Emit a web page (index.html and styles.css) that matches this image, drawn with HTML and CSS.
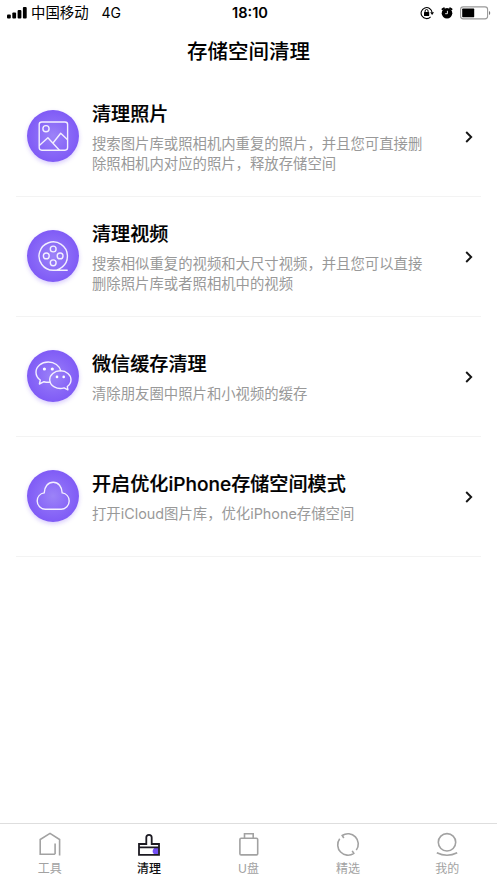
FILE: index.html
```html
<!DOCTYPE html>
<html lang="zh-CN">
<head>
<meta charset="utf-8">
<title>存储空间清理</title>
<link rel="stylesheet" href="styles.css">
</head>
<body>
<div class="screen">
  <div class="status">
    <div class="status-left">
      <svg class="signal" width="20" height="12" viewBox="0 0 20 12"><rect x="0" y="7.5" width="3.8" height="4" rx="1"/><rect x="5.3" y="5.5" width="3.8" height="6" rx="1"/><rect x="10.6" y="3" width="3.8" height="8.5" rx="1"/><rect x="15.9" y="0" width="3.8" height="11.5" rx="1"/></svg>
      <span class="carrier">中国移动</span><span class="network">4G</span>
    </div>
    <span class="clock">18:10</span>
    <div class="status-right">
      <svg width="14" height="14" viewBox="0 0 14 14"><path d="M10.6 10.9A5.5 5.5 0 1 1 12.1 6.5" fill="none" stroke="#000" stroke-width="1.1"/><path d="M10.2 6.3h3.8l-1.9 2.8z"/><rect x="4" y="6.1" width="5.2" height="3.8" rx=".5"/><path d="M5.1 6.4V5a1.5 1.5 0 0 1 3 0v1.4" fill="none" stroke="#000" stroke-width="1"/></svg>
      <svg class="alarm" width="12" height="14" viewBox="0 0 12 14"><circle cx="6" cy="7.3" r="5.3"/><path d="M1.4 3.3 3 2.2M10.6 3.3 9 2.2" stroke="#000" stroke-width="1.8" stroke-linecap="round"/><path d="M6.4 4.8v2.9H4.2" fill="none" stroke="#fff" stroke-width=".9"/></svg>
      <svg width="31" height="14" viewBox="0 0 31 14"><rect x=".6" y=".9" width="27" height="12" rx="2.6" fill="none" stroke="#999" stroke-width="1.1"/><rect x="2.2" y="2.6" width="12" height="8.6" rx=".6"/><path d="M29 5c1.7.8 1.7 3.2 0 4z" fill="#777"/></svg>
    </div>
  </div>
  <h1 class="heading">存储空间清理</h1>
  <main class="list">
    <section class="row">
      <span class="badge"><svg width="52" height="52" viewBox="0 0 52 52"><rect x="12.2" y="12" width="28.4" height="28.2" rx="2.6"/><circle cx="19" cy="18.7" r="3.1"/><path d="m12.6 35.2 8.3-7.4 11.3 12.1M26.2 32.7l7.5-9.5 6.6 6.3"/></svg></span>
      <div class="copy"><h2>清理照片</h2><p>搜索图片库或照相机内重复的照片，并且您可直接删<br>除照相机内对应的照片，释放存储空间</p></div>
      <svg class="chevron" width="8" height="12" viewBox="0 0 8 12"><path d="m1.2 1 5 5-5 5"/></svg>
    </section>
    <section class="row">
      <span class="badge"><svg width="52" height="52" viewBox="0 0 52 52"><path d="M40.2 40.3H26.2A14.2 14.2 0 1 1 35.2 37.1Q32.6 39.5 29.5 40.2"/><circle cx="26.2" cy="19" r="2.9"/><circle cx="19.3" cy="25.9" r="2.9"/><circle cx="33.1" cy="25.9" r="2.9"/><circle cx="26.2" cy="32.8" r="2.9"/></svg></span>
      <div class="copy"><h2>清理视频</h2><p>搜索相似重复的视频和大尺寸视频，并且您可以直接<br>删除照片库或者照相机中的视频</p></div>
      <svg class="chevron" width="8" height="12" viewBox="0 0 8 12"><path d="m1.2 1 5 5-5 5"/></svg>
    </section>
    <section class="row">
      <span class="badge"><svg width="52" height="52" viewBox="0 0 52 52"><path d="M33.7 20.7C32.5 15.7 27.6 12 21.2 12 14.4 12 9 16.6 9 22.2c0 3.2 1.6 5.9 4.3 7.8l-.9 4 4.6-2.3c2.2.6 4.3.7 6.3.4"/><path d="M33.4 20.8c6 0 10.6 4 10.6 8.9 0 2.8-1.4 5.1-3.7 6.8l.6 3.4-3.8-2c-7.1 2-14.4-2.1-14.4-8.2 0-4.9 4.7-8.9 10.7-8.9z"/><g class="eyes"><circle cx="17.4" cy="19" r="1.6"/><circle cx="25.3" cy="19" r="1.6"/><circle cx="30" cy="26.9" r="1.3"/><circle cx="36.7" cy="26.9" r="1.3"/></g></svg></span>
      <div class="copy"><h2>微信缓存清理</h2><p>清除朋友圈中照片和小视频的缓存</p></div>
      <svg class="chevron" width="8" height="12" viewBox="0 0 8 12"><path d="m1.2 1 5 5-5 5"/></svg>
    </section>
    <section class="row">
      <span class="badge"><svg width="52" height="52" viewBox="0 0 52 52"><path d="M18.2 39.3A8.3 8.3 0 0 1 10.2 31c0-4.2 2.9-7.4 7-8.1.2-6.3 3.8-10.7 9-10.7s8.8 4.4 9 10.7c4.1.7 7 3.9 7 8.1a8.3 8.3 0 0 1-8 8.3z"/></svg></span>
      <div class="copy"><h2>开启优化iPhone存储空间模式</h2><p>打开iCloud图片库，优化iPhone存储空间</p></div>
      <svg class="chevron" width="8" height="12" viewBox="0 0 8 12"><path d="m1.2 1 5 5-5 5"/></svg>
    </section>
  </main>
  <nav class="tabs">
    <div class="tab"><svg width="24" height="26" viewBox="0 0 24 26"><path d="M16.9 23.3H2.2V8.5L12 2.4l9.6 6.1v15.9M17.1 12.5v10.8"/></svg><span>工具</span></div>
    <div class="tab active"><svg width="24" height="26" viewBox="0 0 24 26"><path class="accent" d="M21.5 16.7v6.8h-3.7a3.6 3.6 0 1 1 3.7-6.8z"/><path d="M2 13h7.3V6.5a2.7 2.7 0 0 1 5.4 0V13H22v10.8H2zM2 16.3h20"/></svg><span>清理</span></div>
    <div class="tab"><svg width="24" height="26" viewBox="0 0 24 26"><rect x="2.9" y="7.3" width="17.8" height="16.6" rx="1.2"/><path d="M7.5 7.3V2.7h8.7v4.6"/></svg><span>U盘</span></div>
    <div class="tab"><svg width="24" height="26" viewBox="0 0 24 26"><path d="M7.8 7 6.2 4.5A10.3 10.3 0 0 1 20.3 19.1M16.2 19.9l1.6 2.5A10.3 10.3 0 0 1 3.7 7.8M6.2 4.5l1.5-.8M17.8 22.4l-1.5.8"/></svg><span>精选</span></div>
    <div class="tab"><svg width="24" height="26" viewBox="0 0 24 26"><circle cx="12" cy="11.3" r="8.7"/><path d="M1.8 21.7c6.2 3.1 14.2 3.1 20.4 0"/></svg><span>我的</span></div>
  </nav>
</div>
</body>
</html>
```
FILE: styles.css
```css
* { box-sizing: border-box; }
body { margin: 0; background: #fff; color: #000; font-family: Inter, "Noto Sans CJK SC", sans-serif; }
h1, h2, p { margin: 0; }
svg { display: block; flex: none; }
.screen { height: 883px; display: flex; flex-direction: column; overflow: hidden; }
.status { height: 26px; display: grid; grid-template-columns: 1fr auto 1fr; align-items: center; padding: 0 6px 0 7px; }
.status-left, .status-right { display: flex; align-items: center; }
.status-right { justify-content: flex-end; gap: 7px; padding-bottom: 1px; }
.status-left { font-size: 14.4px; line-height: 20px; }
.carrier { margin-left: 4px; }
.network { margin-left: 13px; font-size: 14px; }
.clock { font-size: 14.6px; font-weight: 600; line-height: 20px; padding-left: 2px; }
.heading { height: 51px; line-height: 52px; text-align: center; font-size: 20.5px; font-weight: 500; }
.list { flex: 1; padding: 0 16px; }
.row { height: 120px; display: flex; align-items: center; padding: 0 8px 0 11px; border-bottom: 1px solid #f3f3f3; }
.badge { flex: none; width: 52px; height: 52px; margin-bottom: 2px; border-radius: 50%; background: radial-gradient(circle, #9c83f8 0%, #8968f7 45%, #754df4 100%); box-shadow: 0 2px 4px rgba(117, 77, 244, .28); }
.badge svg { fill: none; stroke: #f3efff; stroke-width: 1.4; stroke-linecap: round; stroke-linejoin: round; }
.badge .eyes { fill: #fff; stroke: none; }
.copy { flex: 1; margin-left: 13px; white-space: nowrap; }
.copy h2 { font-size: 19.1px; line-height: 30px; font-weight: 500; -webkit-text-stroke: .2px #000; }
.copy p { font-size: 14.36px; line-height: 20px; color: #999; margin-top: 5px; }
.chevron { fill: none; stroke: #161616; stroke-width: 1.9; }
.tabs { height: 60px; display: flex; border-top: 1px solid #dedede; }
.tab { flex: 1; display: flex; flex-direction: column; align-items: center; padding-top: 7px; color: #a2a2a2; font-size: 12px; line-height: 18px; }
.tab svg { fill: none; stroke: #a2a2a2; stroke-width: 1.6; margin-bottom: 3px; }
.tab.active { color: #111; font-weight: 500; }
.tab.active svg { stroke: #1c1a22; stroke-width: 1.8; }
.tab .accent { fill: #7550f5; stroke: none; }
```
